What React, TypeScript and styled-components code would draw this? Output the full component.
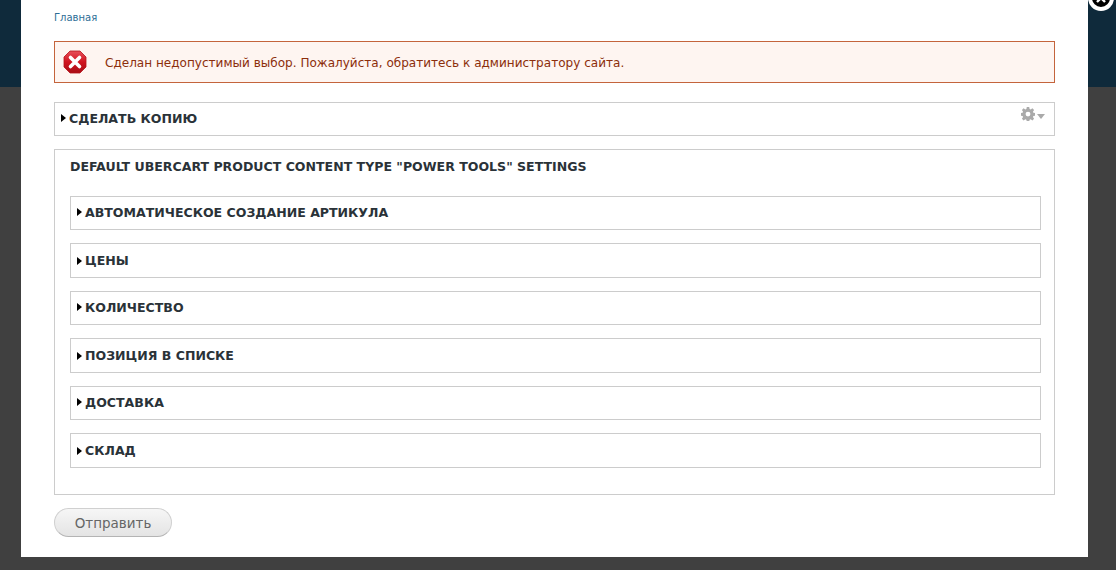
import React from 'react'
import styled, { createGlobalStyle } from 'styled-components'

const GlobalStyle = createGlobalStyle`
  html, body {
    margin: 0;
    padding: 0;
    height: 100%;
    overflow: hidden;
    background: #404040;
  }
  * {
    box-sizing: border-box;
  }
`

const Page = styled.div`
  position: relative;
  width: 1116px;
  height: 570px;
  background: #404040;
  font-family: "DejaVu Sans", Verdana, sans-serif;
`

const TopBand = styled.div`
  height: 87px;
  background: #0f2a3b;
`

const Modal = styled.div`
  position: absolute;
  top: 0;
  left: 21px;
  width: 1067px;
  height: 557px;
  background: #fff;
  padding: 11px 33px 0;
  display: flex;
  flex-direction: column;
`

const CloseButton = styled.button`
  position: absolute;
  top: -15px;
  left: 1067px;
  width: 26px;
  height: 26px;
  padding: 0;
  border: 4px solid #fff;
  border-radius: 50%;
  background: #000;
  color: #fff;
  display: flex;
  align-items: center;
  justify-content: center;
`

const Breadcrumb = styled.a`
  font-size: 10px;
  line-height: 13px;
  color: #2d6e96;
  height: 13px;
  text-decoration: none;
`

const ErrorBox = styled.div`
  margin-top: 17px;
  height: 42px;
  display: flex;
  align-items: center;
  gap: 18px;
  padding: 0 0 0 8px;
  background: #fef5f1;
  border: 1px solid #c4643c;
  color: #8c2e0b;
  font-size: 12.05px;
`

const ErrorText = styled.span`
  padding-top: 1px;
`

const Fieldset = styled.div`
  border: 1px solid #ccc;
  background: #fff;
`

const CollapsedRow = styled(Fieldset)<{ $height: number; $top: number }>`
  position: relative;
  height: ${(p) => p.$height}px;
  margin-top: ${(p) => p.$top}px;
  padding: 0 0 ${(p) => (p.$height === 35 ? 0 : 2)}px 6px;
  display: flex;
  align-items: center;
  gap: 3px;
`

const Arrow = styled.span`
  width: 0;
  height: 0;
  border-style: solid;
  border-width: 4px 0 4px 5px;
  border-color: transparent transparent transparent #000;
`

const Legend = styled.span`
  font-size: 12.55px;
  font-weight: bold;
  color: #2a3238;
  text-transform: uppercase;
  white-space: nowrap;
`

const Gear = styled.div`
  position: absolute;
  top: 4px;
  right: 9px;
  display: flex;
  align-items: center;
  gap: 2px;
  color: #aaa;
`

const Caret = styled.span`
  width: 0;
  height: 0;
  border-style: solid;
  border-width: 5px 4px 0 4px;
  border-color: #aaa transparent transparent transparent;
  margin-top: 5px;
`

const Group = styled(Fieldset)`
  margin-top: 13px;
  height: 346px;
  padding: 8px 13px 0 15px;
`

const GroupTitle = styled.div`
  height: 16px;
  line-height: 16px;
  margin-bottom: 22px;
`

const SubmitButton = styled.button`
  margin-top: 13px;
  width: 118px;
  height: 29px;
  padding: 0;
  border: 1px solid #d0d0d0;
  border-bottom-color: #b4b4b4;
  border-radius: 15px;
  background: linear-gradient(to bottom, #f6f6f6, #e4e4e4);
  color: #666;
  font-family: "DejaVu Sans", Verdana, sans-serif;
  font-size: 13.5px;
`

const GearIcon = () => (
  <svg width="14" height="14" viewBox="0 0 15 15" fill="currentColor">
    <path
      fillRule="evenodd"
      d="M6.2 0h2.6l.4 2.1 1.2.5L12.2 1.4 14 3.2l-1.2 1.8.5 1.2 2 .4v2.6l-2 .4-.5 1.2 1.2 1.8-1.8 1.8-1.8-1.2-1.2.5-.4 2H6.2l-.4-2-1.2-.5-1.8 1.2L1 12.6l1.2-1.8-.5-1.2-2-.4V6.6l2-.4.5-1.2L1 3.2l1.8-1.8 1.8 1.2 1.2-.5zM7.5 5a2.6 2.6 0 1 0 0 5.200a2.6 2.6 0 0 0 0-5.200z"
    />
  </svg>
)

const ErrorIcon = () => (
  <svg width="24" height="24" viewBox="0 0 24 24">
    <defs>
      <linearGradient id="errFill" x1="0" y1="0" x2="0" y2="1">
        <stop offset="0" stopColor="#e8505a" />
        <stop offset="0.5" stopColor="#d0141f" />
        <stop offset="1" stopColor="#a80d16" />
      </linearGradient>
    </defs>
    <path d="M7 1h10l6 6v10l-6 6H7l-6-6V7z" fill="url(#errFill)" stroke="#b5121b" strokeWidth="0.8" strokeLinejoin="round" />
    <path d="M7.500 7.500l9 9M16.500 7.500l-9 9" stroke="#fff" strokeWidth="3.600" strokeLinecap="round" />
  </svg>
)

const subRows = [
  { title: 'Автоматическое создание артикула', height: 34, top: 0 },
  { title: 'Цены', height: 35, top: 13 },
  { title: 'Количество', height: 34, top: 13 },
  { title: 'Позиция в списке', height: 35, top: 13 },
  { title: 'Доставка', height: 34, top: 13 },
  { title: 'Склад', height: 35, top: 13 },
]

const App = () => {
  return (
    <Page>
      <GlobalStyle />
      <TopBand />
      <Modal>
        <Breadcrumb href="#">Главная</Breadcrumb>
        <ErrorBox>
          <ErrorIcon />
          <ErrorText>Сделан недопустимый выбор. Пожалуйста, обратитесь к администратору сайта.</ErrorText>
        </ErrorBox>
        <CollapsedRow $height={34} $top={19}>
          <Arrow />
          <Legend>Сделать копию</Legend>
          <Gear>
            <GearIcon />
            <Caret />
          </Gear>
        </CollapsedRow>
        <Group>
          <GroupTitle>
            <Legend>Default Ubercart product content type "Power tools" settings</Legend>
          </GroupTitle>
          {subRows.map((row) => (
            <CollapsedRow key={row.title} $height={row.height} $top={row.top}>
              <Arrow />
              <Legend>{row.title}</Legend>
            </CollapsedRow>
          ))}
        </Group>
        <SubmitButton>Отправить</SubmitButton>
        <CloseButton aria-label="Закрыть">
          <svg width="12" height="12" viewBox="0 0 12 12">
            <path d="M2 2l8 8M10 2l-8 8" stroke="#fff" strokeWidth="2.400" />
          </svg>
        </CloseButton>
      </Modal>
    </Page>
  )
}

export default App
